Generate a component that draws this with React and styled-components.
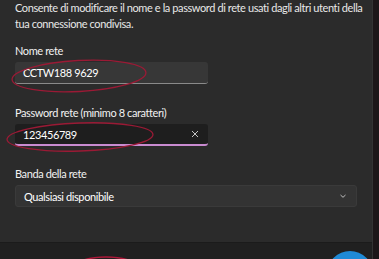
import React from "react";
import styled, { createGlobalStyle } from "styled-components";

const Global = createGlobalStyle`
  html, body { margin: 0; padding: 0; background: #1c1719; }
  body { font-family: "Lato", "Noto Sans", sans-serif; color: #fff; overflow: hidden; }
  #root { width: 379px; height: 259px; }
`;

const Screen = styled.div`
  position: relative;
  display: flex;
  width: 379px;
  height: 259px;
  overflow: hidden;
`;

const Dialog = styled.div`
  width: 373px;
  display: flex;
  flex-direction: column;
  background: #2b2b2b;
  border-right: 1px solid #333;
  box-sizing: border-box;
`;

const Edge = styled.div`
  flex: 1;
  background: #1c1618;
`;

const Body = styled.div`
  flex: 1;
  padding: 0 15px;
  display: flex;
  flex-direction: column;
  font-size: 11px;
  letter-spacing: -0.4px;
`;

const Desc = styled.p`
  margin: 0;
  line-height: 16px;
  color: #e8e8e8;
  white-space: nowrap;
`;

const Field = styled.div`
  display: flex;
  flex-direction: column;
  gap: 3px;
  margin-top: ${(p) => p.$top}px;
`;

const Label = styled.div`
  line-height: 16px;
  color: #f2f2f2;
`;

const Input = styled.div`
  box-sizing: border-box;
  width: ${(p) => p.$width}px;
  height: 22px;
  display: flex;
  align-items: center;
  justify-content: space-between;
  padding: 0 8px 0 8px;
  border-radius: 3px;
  color: #fff;
  background: ${(p) => (p.$focused ? "#1e1e1e" : "#373737")};
  border-bottom: ${(p) => (p.$focused ? "2px solid #c98bd0" : "1px solid #8a8a8a")};
  ${(p) => p.$select && "border-bottom: none; background: #333333; border: 1px solid #3a3a3a;"}
`;

const Footer = styled.div`
  height: 16px;
  background: #202020;
  border-top: 1px solid #1b1b1b;
`;

const Overlay = styled.svg`
  position: absolute;
  left: 0;
  top: 0;
  pointer-events: none;
`;

export default function App() {
  return (
    <>
      <Global />
      <Screen>
        <Dialog>
          <Body>
            <Desc>
              Consente di modificare il nome e la password di rete usati dagli altri utenti della
              <br />
              tua connessione condivisa.
            </Desc>
            <Field $top={11}>
              <Label>Nome rete</Label>
              <Input $width={193}>CCTW188 9629</Input>
            </Field>
            <Field $top={21}>
              <Label>Password rete (minimo 8 caratteri)</Label>
              <Input $width={193} $focused>
                <span>123456789</span>
                <svg width="10" height="10" viewBox="0 0 10 10">
                  <path d="M2 2 L8 8 M8 2 L2 8" fill="none" stroke="#c4c4c4" strokeWidth="1" />
                </svg>
              </Input>
            </Field>
            <Field $top={20}>
              <Label>Banda della rete</Label>
              <Input $width={342} $select>
                <span>Qualsiasi disponibile</span>
                <svg width="10" height="10" viewBox="0 0 10 10">
                  <path d="M2.5 4 L5 6.3 L7.5 4" fill="none" stroke="#bdbdbd" strokeWidth="1" />
                </svg>
              </Input>
            </Field>
          </Body>
          <Footer />
        </Dialog>
        <Edge />
        <Overlay width="379" height="259" viewBox="0 0 379 259">
          <ellipse cx="79" cy="76" rx="67" ry="15.5" fill="none" stroke="#9a1a35" strokeWidth="1.3" transform="rotate(-3 79 76)" />
          <ellipse cx="80" cy="137" rx="73" ry="14" fill="none" stroke="#9a1a35" strokeWidth="1.3" transform="rotate(-2 80 137)" />
          <ellipse cx="106" cy="271" rx="36" ry="14" fill="none" stroke="#b0183a" strokeWidth="1.5" />
          <circle cx="350" cy="274" r="23" fill="#1f8ad6" />
        </Overlay>
      </Screen>
    </>
  );
}
